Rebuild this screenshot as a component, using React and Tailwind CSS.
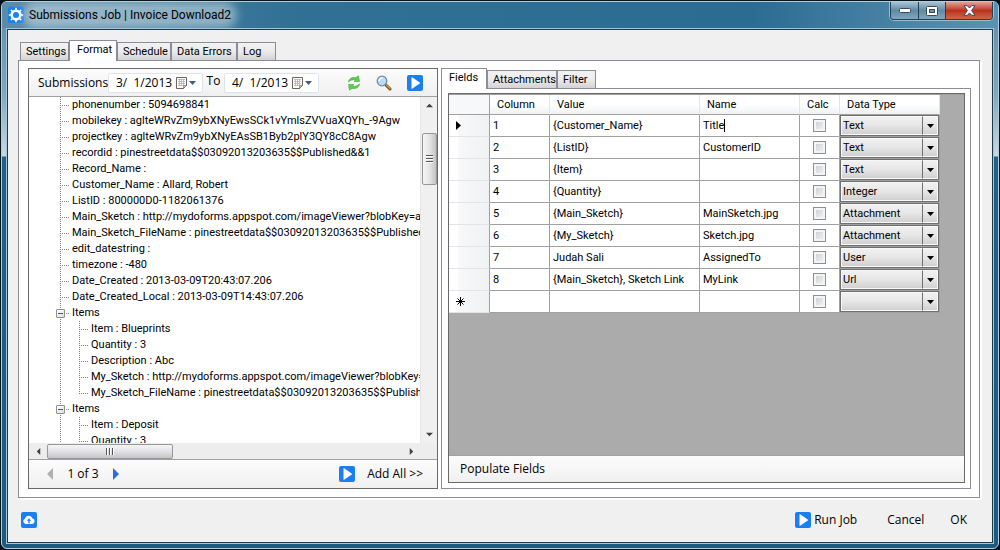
import { useState } from 'react';

const treeRows = [
  { text: 'phonenumber : 5094698841' },
  { text: 'mobilekey : aglteWRvZm9ybXNyEwsSCk1vYmlsZVVuaXQYh_-9Agw' },
  { text: 'projectkey : aglteWRvZm9ybXNyEAsSB1Byb2plY3QY8cC8Agw' },
  { text: 'recordid : pinestreetdata$$03092013203635$$Published&&1' },
  { text: 'Record_Name :' },
  { text: 'Customer_Name : Allard, Robert' },
  { text: 'ListID : 800000D0-1182061376' },
  { text: 'Main_Sketch : http://mydoforms.appspot.com/imageViewer?blobKey=aglt' },
  { text: 'Main_Sketch_FileName : pinestreetdata$$03092013203635$$Published$' },
  { text: 'edit_datestring :' },
  { text: 'timezone : -480' },
  { text: 'Date_Created : 2013-03-09T20:43:07.206' },
  { text: 'Date_Created_Local : 2013-03-09T14:43:07.206' },
  {
    text: 'Items',
    children: [
      'Item : Blueprints',
      'Quantity : 3',
      'Description : Abc',
      'My_Sketch : http://mydoforms.appspot.com/imageViewer?blobKey=ag',
      'My_Sketch_FileName : pinestreetdata$$03092013203635$$Published',
    ],
  },
  { text: 'Items', children: ['Item : Deposit', 'Quantity : 3'] },
];

const fields = [
  { id: '1', value: '{Customer_Name}', name: 'Title', type: 'Text', editing: true },
  { id: '2', value: '{ListID}', name: 'CustomerID', type: 'Text' },
  { id: '3', value: '{Item}', name: '', type: 'Text' },
  { id: '4', value: '{Quantity}', name: '', type: 'Integer' },
  { id: '5', value: '{Main_Sketch}', name: 'MainSketch.jpg', type: 'Attachment' },
  { id: '6', value: '{My_Sketch}', name: 'Sketch.jpg', type: 'Attachment' },
  { id: '7', value: 'Judah Sali', name: 'AssignedTo', type: 'User' },
  { id: '8', value: '{Main_Sketch}, Sketch Link', name: 'MyLink', type: 'Url' },
  { id: '', value: '', name: '', type: '', isNew: true },
];

const dataTypes = ['', 'Text', 'Integer', 'Attachment', 'User', 'Url'];

function GearIcon() {
  return (
    <svg width="16" height="16" viewBox="0 0 16 16" className="shrink-0">
      <rect width="16" height="16" rx="2" fill="#1a7ff0" />
      <circle cx="8" cy="8" r="4.300" fill="none" stroke="#fff" strokeWidth="2.600" />
      <g stroke="#fff" strokeWidth="1.600">
        <path d="M8 .8v2.500M8 12.700v2.500M.8 8h2.500M12.700 8h2.500M2.900 2.900l1.800 1.800M11.300 11.300l1.800 1.800M13.100 2.900l-1.800 1.800M4.700 11.300l-1.800 1.800" />
      </g>
    </svg>
  );
}

function PlayIcon() {
  return (
    <svg width="16" height="16" viewBox="0 0 16 16" className="shrink-0">
      <rect width="16" height="16" rx="2" fill="#1a7ff0" />
      <path d="M4.500 2.600v10.800q0 .6.6.3l7.600-5.200q.5-.5 0-1L5.100 2.300q-.6-.3-.6.3z" fill="#fff" />
    </svg>
  );
}

function CloudIcon() {
  return (
    <svg width="16" height="16" viewBox="0 0 16 16" className="shrink-0">
      <rect width="16" height="16" rx="2" fill="#1a7ff0" />
      <path d="M4.600 12A2.800 2.800 0 0 1 3.900 6.700A3.900 3.900 0 0 1 11.300 6.200A3 3 0 0 1 11.400 12z" fill="#fff" />
      <path d="M8 6.200L5.800 8.800h1.500v2.400h1.400V8.800h1.500z" fill="#1a7ff0" />
    </svg>
  );
}

function RefreshIcon() {
  return (
    <svg width="14" height="16" viewBox="0 0 14 16">
      <g fill="#5fd048" stroke="#2f9e28" strokeWidth=".5">
        <path d="M1.500 7C1.800 3.600 5 1.800 9 2.600L11.500.8L12.500 6.600L7 6.400L8.600 4.900C5.800 4.300 3.900 5 1.500 7z" />
        <path d="M12.500 9C12.200 12.400 9 14.200 5 13.400L2.500 15.200L1.500 9.400L7 9.600L5.400 11.100C8.200 11.700 10.100 11 12.500 9z" />
      </g>
    </svg>
  );
}

function SearchIcon() {
  return (
    <svg width="16" height="16" viewBox="0 0 16 16">
      <path d="M9.500 9.500L14 14" stroke="#6b4a23" strokeWidth="3" strokeLinecap="round" />
      <path d="M10.500 10L14 13.500" stroke="#d9923a" strokeWidth="1.400" strokeLinecap="round" />
      <circle cx="6" cy="6" r="4.800" fill="#b9ddf5" stroke="#6f8ba8" strokeWidth="1.300" />
      <path d="M3.200 6A3 3 0 0 1 6.500 3" stroke="#fff" strokeWidth="1.600" fill="none" />
    </svg>
  );
}

function CalendarIcon() {
  return (
    <svg width="20" height="12" viewBox="0 0 20 12">
      <path d="M.5.5h10v8l-3 3h-7z" fill="#fff" stroke="#6e6259" />
      <path d="M7.500 11.500v-3h3z" fill="#cfc8c0" stroke="#6e6259" strokeWidth=".6" />
      <path d="M2 2.500h7M2 4.500h7M2 6.500h7M2 8.500h5M3.500 2v7M5.500 2v7M7.500 2v6" stroke="#a9b3bf" strokeWidth=".8" />
      <path d="M13 4h7l-3.500 4z" fill="#44598a" />
    </svg>
  );
}

function Arrow({ direction, fill = '#404040', size = 7 }) {
  const paths = {
    up: 'M0 6L4 2l4 4z',
    down: 'M0 2l4 4l4-4z',
    left: 'M6 0L2 4l4 4z',
    right: 'M2 0l4 4l-4 4z',
  };
  return (
    <svg width={size} height={size} viewBox="0 0 8 8">
      <path d={paths[direction]} fill={fill} />
    </svg>
  );
}

function TitleBar() {
  const glass = 'flex items-center justify-center border-r border-[#243f52] bg-linear-to-b from-[#a9c2d2] via-[#5e8aa5] via-50% to-[#7fa8be]';
  return (
    <header className="flex h-[26px] shrink-0 items-start justify-between bg-[linear-gradient(90deg,#5b8daa_0,#2f7094_30%,#2b6c92_75%,#4580a3_88%,#5c92b1_100%)] pl-[6px] pr-[5px]">
      <div className="flex h-[26px] items-center gap-[5px]">
        <GearIcon />
        <h1 className="rounded-full bg-white/40 font-[Roboto,sans-serif] text-[12px] leading-[16px] text-black shadow-[0_0_8px_6px_rgba(255,255,255,0.4)]">
          Submissions Job | Invoice Download2
        </h1>
      </div>
      <div className="flex h-[18px] overflow-hidden rounded-b-[4px] border border-t-0 border-[#243f52] shadow-[0_0_0_1px_#9dbccd]">
        <button type="button" aria-label="Minimize" className={`${glass} w-[28px]`}>
          <svg width="12" height="6"><rect x=".5" y=".5" width="11" height="4" rx="1" fill="#fff" stroke="#3c4a58" /></svg>
        </button>
        <button type="button" aria-label="Maximize" className={`${glass} w-[27px]`}>
          <svg width="12" height="10">
            <rect x=".5" y=".5" width="11" height="9" rx="1" fill="#fff" stroke="#3c4a58" />
            <rect x="3.500" y="3.500" width="5" height="3" fill="#6c93ab" stroke="#3c4a58" />
          </svg>
        </button>
        <button type="button" aria-label="Close" className="flex w-[46px] items-center justify-center bg-linear-to-b from-[#dfa192] via-[#b8321c] via-50% to-[#cf6549]">
          <svg width="13" height="11" viewBox="0 0 13 11">
            <path d="M1 .7h3.200L6.500 3L8.800.7H12L8.600 5.500L12 10.300H8.800L6.500 8L4.200 10.300H1L4.400 5.500z" fill="#fff" stroke="#4a4450" />
          </svg>
        </button>
      </div>
    </header>
  );
}

function Tab({ label, active, width, onClick }) {
  return (
    <button
      type="button"
      role="tab"
      aria-selected={active}
      onClick={onClick}
      className={`${width} whitespace-nowrap border border-b-0 border-[#8b8c99] text-left font-[Roboto,sans-serif] text-[11px] leading-[16px] ${
        active
          ? 'relative -mb-px h-[21px] bg-white pb-[2px] pl-[7px]'
          : 'h-[18px] bg-linear-to-b from-[#f2f2f2] via-[#ebebeb] via-50% to-[#d3d3d3] pl-[5px]'
      }`}
    >
      {label}
    </button>
  );
}

function DateBox({ label, value }) {
  return (
    <div className="flex h-[20px] items-center rounded-[2px] border border-[#dfe3ee] bg-white">
      <input aria-label={label} defaultValue={value} className="w-[67px] pl-[7px] text-[12px] leading-[16px] outline-none" />
      <button type="button" aria-label={`Choose ${label}`} className="mr-[6px]"><CalendarIcon /></button>
    </div>
  );
}

const H_DOTS = 'bg-[repeating-linear-gradient(90deg,#808080_0_1px,transparent_1px_2px)]';
const V_DOTS = 'bg-[repeating-linear-gradient(180deg,#808080_0_1px,transparent_1px_2px)]';

function TreeNode({ node }) {
  return (
    <li>
      <div className="flex h-[16px] items-center">
        {node.children ? (
          <>
            <button type="button" aria-label="Collapse" className="z-10 -ml-[4px] flex size-[9px] items-center justify-center rounded-[1px] border border-[#8f8f8f] bg-linear-to-br from-white to-[#dcdcdc]">
              <span className="h-px w-[5px] bg-[#3c50a0]" />
            </button>
            <span className={`ml-px mr-[3px] h-px w-[3px] shrink-0 ${H_DOTS}`} />
          </>
        ) : (
          <span className={`ml-[2px] mr-[3px] h-px w-[7px] shrink-0 ${H_DOTS}`} />
        )}
        <span className="whitespace-nowrap">{node.text}</span>
      </div>
      {node.children && (
        <ul className="ml-[19px]">
          {node.children.map((child, i) => (
            <li key={child} className="flex h-[16px] items-center">
              <span className={`w-px shrink-0 self-start ${V_DOTS} ${i === node.children.length - 1 ? 'h-[9px]' : 'h-[16px]'}`} />
              <span className={`ml-px mr-[3px] h-px w-[7px] shrink-0 ${H_DOTS}`} />
              <span className="whitespace-nowrap">{child}</span>
            </li>
          ))}
        </ul>
      )}
    </li>
  );
}

function SubmissionsPanel() {
  return (
    <section className="flex min-h-0 min-w-0 flex-col border border-[#696969]">
      <div className="flex h-[28px] shrink-0 items-center border-b border-[#a0a0a0] bg-linear-to-b from-[#fcfcfc] to-[#f0f0f0] pl-[9px] pr-[14px]">
        <span className="w-[70px] text-[12px]">Submissions</span>
        <DateBox label="from date" value="3/  1/2013" />
        <span className="w-[21px] pb-[4px] text-center text-[12px]">To</span>
        <DateBox label="to date" value="4/  1/2013" />
        <div className="ml-auto flex items-center gap-[15px]">
          <button type="button" aria-label="Refresh"><RefreshIcon /></button>
          <button type="button" aria-label="Search"><SearchIcon /></button>
          <button type="button" aria-label="Run"><PlayIcon /></button>
        </div>
      </div>

      <div className="flex min-h-0 flex-1 bg-white">
        <div className="min-w-0 flex-1 overflow-hidden pl-[31px] font-[Roboto,sans-serif] text-[11px] leading-[16px]">
          <ul className={`${V_DOTS} bg-[length:1px_100%] bg-no-repeat`}>
            {treeRows.map((node, i) => <TreeNode key={i} node={node} />)}
          </ul>
        </div>
        <div className="flex w-[17px] shrink-0 flex-col items-center border-l border-[#e6e6e6] bg-[#f0f0f0]">
          <button type="button" aria-label="Scroll up" className="flex h-[17px] items-center"><Arrow direction="up" /></button>
          <div className="mt-[19px] flex h-[52px] w-[15px] flex-col items-center justify-center gap-px rounded-[2px] border border-[#979797] bg-linear-to-r from-[#f5f5f5] via-[#e4e4e6] to-[#c4c4c8]">
            <span className="h-[2px] w-[7px] border-t border-[#555] bg-white" />
            <span className="h-[2px] w-[7px] border-t border-[#555] bg-white" />
            <span className="h-[2px] w-[7px] border-t border-[#555] bg-white" />
          </div>
          <button type="button" aria-label="Scroll down" className="mt-auto flex h-[17px] items-center"><Arrow direction="down" /></button>
        </div>
      </div>

      <div className="flex h-[16px] shrink-0 items-center bg-[#ededed] pr-[17px]">
        <button type="button" aria-label="Scroll left" className="flex w-[18px] justify-center"><Arrow direction="left" /></button>
        <div className="flex h-[15px] w-[126px] items-center justify-center gap-px rounded-[2px] border border-[#979797] bg-linear-to-b from-[#f5f5f5] via-[#e2e2e4] to-[#c4c4c8]">
          <span className="h-[7px] w-[2px] border-l border-[#555] bg-white" />
          <span className="h-[7px] w-[2px] border-l border-[#555] bg-white" />
          <span className="h-[7px] w-[2px] border-l border-[#555] bg-white" />
        </div>
        <button type="button" aria-label="Scroll right" className="ml-auto flex w-[18px] justify-center"><Arrow direction="right" /></button>
      </div>

      <div className="flex h-[29px] shrink-0 items-center border-t border-[#a0a0a0] bg-linear-to-b from-[#fcfcfc] to-[#f0f0f0] pl-[15px] pr-[14px] text-[12px]">
        <button type="button" aria-label="Previous record"><Arrow direction="left" fill="#b0b0b0" size={12} /></button>
        <span className="w-[54px] text-center">1 of 3</span>
        <button type="button" aria-label="Next record"><Arrow direction="right" fill="#2a6fe0" size={12} /></button>
        <button type="button" className="ml-auto flex items-center gap-[12px]">
          <PlayIcon />
          Add All &gt;&gt;
        </button>
      </div>
    </section>
  );
}

function TypeSelect({ value }) {
  return (
    <div className="flex h-[21px] items-stretch border border-[#707070] bg-linear-to-b from-[#f2f2f2] via-[#e6e6e6] via-50% to-[#cfcfcf]">
      <div className="relative flex-1">
        <select
          aria-label="Data type"
          defaultValue={value}
          className="h-full w-full appearance-none border border-[#f8f8f8] pl-px text-[11px] leading-[16px] outline-none"
        >
          {dataTypes.map(t => <option key={t} value={t}>{t}</option>)}
        </select>
        <span className="pointer-events-none absolute inset-y-0 right-0 flex w-[16px] items-center justify-center border border-l border-[#f8f8f8] border-l-[#707070]">
          <svg width="7" height="4"><path d="M0 0h7L3.500 4z" fill="#000" /></svg>
        </span>
      </div>
    </div>
  );
}

function FieldsGrid() {
  const th = 'border-r border-b border-r-[#e2e4e8] border-b-[#a0a0a0] bg-linear-to-b from-white from-50% to-[#f0f1f3] pl-[7px] text-left font-normal';
  const td = 'border-r border-b border-[#a0a0a0] bg-white pl-[3px]';
  return (
    <table className="w-[491px] table-fixed border-separate border-spacing-0 font-[Roboto,sans-serif] text-[11px] leading-[16px]">
      <colgroup>
        <col className="w-[41px]" />
        <col className="w-[60px]" />
        <col className="w-[150px]" />
        <col className="w-[100px]" />
        <col className="w-[40px]" />
        <col className="w-[100px]" />
      </colgroup>
      <thead>
        <tr className="h-[20px]">
          <th className="border-r border-b border-[#a0a0a0] bg-[#f7f8fa]" aria-label="Row" />
          <th className={th}>Column</th>
          <th className={th}>Value</th>
          <th className={th}>Name</th>
          <th className={th}>Calc</th>
          <th className={th}>Data Type</th>
        </tr>
      </thead>
      <tbody>
        {fields.map(f => (
          <tr key={f.id} className="h-[22px]">
            <td className="border-r border-b border-r-[#a0a0a0] border-b-[#e2e4e8] bg-linear-to-r from-white from-20% via-[#f7f8fa] via-25% to-[#f0f1f3] pl-[7px]">
              {f.editing && <svg width="5" height="9"><path d="M0 0l5 4.500L0 9z" fill="#000" /></svg>}
              {f.isNew && (
                <svg width="9" height="9" viewBox="0 0 9 9">
                  <path d="M4.500 0v9M0 4.500h9M1.500 1.500l6 6M7.500 1.500l-6 6" stroke="#000" />
                </svg>
              )}
            </td>
            <td className={td}>{f.id}</td>
            <td className={td}>{f.value}</td>
            <td className={td}>
              {f.editing ? (
                <span className="flex items-center">
                  <input aria-label="Name" defaultValue={f.name} className="field-sizing-content outline-none" />
                  <span className="h-[13px] w-px bg-black" />
                </span>
              ) : f.name}
            </td>
            <td className="border-r border-b border-[#a0a0a0] bg-white">
              <input
                type="checkbox"
                aria-label="Calc"
                className="mx-auto block size-[13px] appearance-none border border-[#8e8f8f] bg-linear-to-br from-[#c6cbd2] to-[#f6f6f6] shadow-[inset_0_0_0_2px_#f4f4f4]"
              />
            </td>
            <td className="border-r border-b border-[#a0a0a0] bg-white p-0"><TypeSelect value={f.type} /></td>
          </tr>
        ))}
      </tbody>
    </table>
  );
}

function FieldsPanel() {
  const [tab, setTab] = useState('Fields');
  const tabs = [
    { label: 'Fields', width: 'w-[46px]' },
    { label: 'Attachments', width: 'w-[70px]' },
    { label: 'Filter', width: 'w-[39px]' },
  ];
  return (
    <section className="flex min-h-0 min-w-0 flex-col">
      <div role="tablist" className="flex h-[20px] shrink-0 items-end">
        {tabs.map(t => <Tab key={t.label} {...t} active={tab === t.label} onClick={() => setTab(t.label)} />)}
      </div>
      <div className="flex min-h-0 flex-1 flex-col border border-[#8b8c99] bg-white pt-[4px] pr-[5px] pb-[5px] pl-[6px]">
        <div className="flex min-h-0 flex-1 flex-col border border-[#696969]">
          <div className="min-h-0 flex-1 overflow-hidden border-t border-[#a0a0a0] bg-[#ababab]">
            <FieldsGrid />
          </div>
          <div className="flex h-[27px] shrink-0 items-center border-t border-[#a0a0a0] bg-linear-to-b from-[#fcfcfc] to-[#f0f0f0] pl-[11px] text-[12px]">
            <button type="button">Populate Fields</button>
          </div>
        </div>
      </div>
    </section>
  );
}

export default function App() {
  const [tab, setTab] = useState('Format');
  const tabs = [
    { label: 'Settings', width: 'w-[49px]' },
    { label: 'Format', width: 'w-[48px]' },
    { label: 'Schedule', width: 'w-[54px]' },
    { label: 'Data Errors', width: 'w-[66px]' },
    { label: 'Log', width: 'w-[39px]' },
  ];

  return (
    <div className="h-screen bg-[#06141d] p-px font-['Open_Sans',sans-serif] text-black">
      <div className="flex h-full flex-col overflow-hidden rounded-[6px] border border-[#b5cedb] bg-[linear-gradient(180deg,#5b8daa_0,#7fa6bd_90px,#c9d8e3_154px,#1f6288_155px,#1c5a80_100%)]">
        <TitleBar />
        <div className="flex min-h-0 flex-1 px-[4px] pb-[4px]">
          <div className="flex min-w-0 flex-1 border border-[#a5c6d8]">
            <main className="flex min-w-0 flex-1 flex-col border border-[#1d3a4a] bg-[#f0f0f0] pt-[10px] pr-[12px] pl-[10px]">
              <div role="tablist" className="flex h-[20px] shrink-0 items-end pl-[2px]">
                {tabs.map(t => <Tab key={t.label} {...t} active={tab === t.label} onClick={() => setTab(t.label)} />)}
              </div>
              <div className="grid min-h-0 flex-1 grid-cols-[minmax(0,410fr)_minmax(0,530fr)] grid-rows-[minmax(0,1fr)] gap-[3px] border border-[#8b8c99] bg-white pt-[7px] pr-[8px] pb-[8px] pl-[9px] shadow-[2px_2px_0_#fff]">
                <SubmissionsPanel />
                <FieldsPanel />
              </div>
              <footer className="flex h-[44px] shrink-0 items-center pr-[13px] pl-[3px] text-[12px]">
                <button type="button" aria-label="Upload"><CloudIcon /></button>
                <button type="button" className="ml-auto flex items-center gap-[3px]"><PlayIcon />Run Job</button>
                <button type="button" className="ml-[30px]">Cancel</button>
                <button type="button" className="ml-[26px]">OK</button>
              </footer>
            </main>
          </div>
        </div>
      </div>
    </div>
  );
}
